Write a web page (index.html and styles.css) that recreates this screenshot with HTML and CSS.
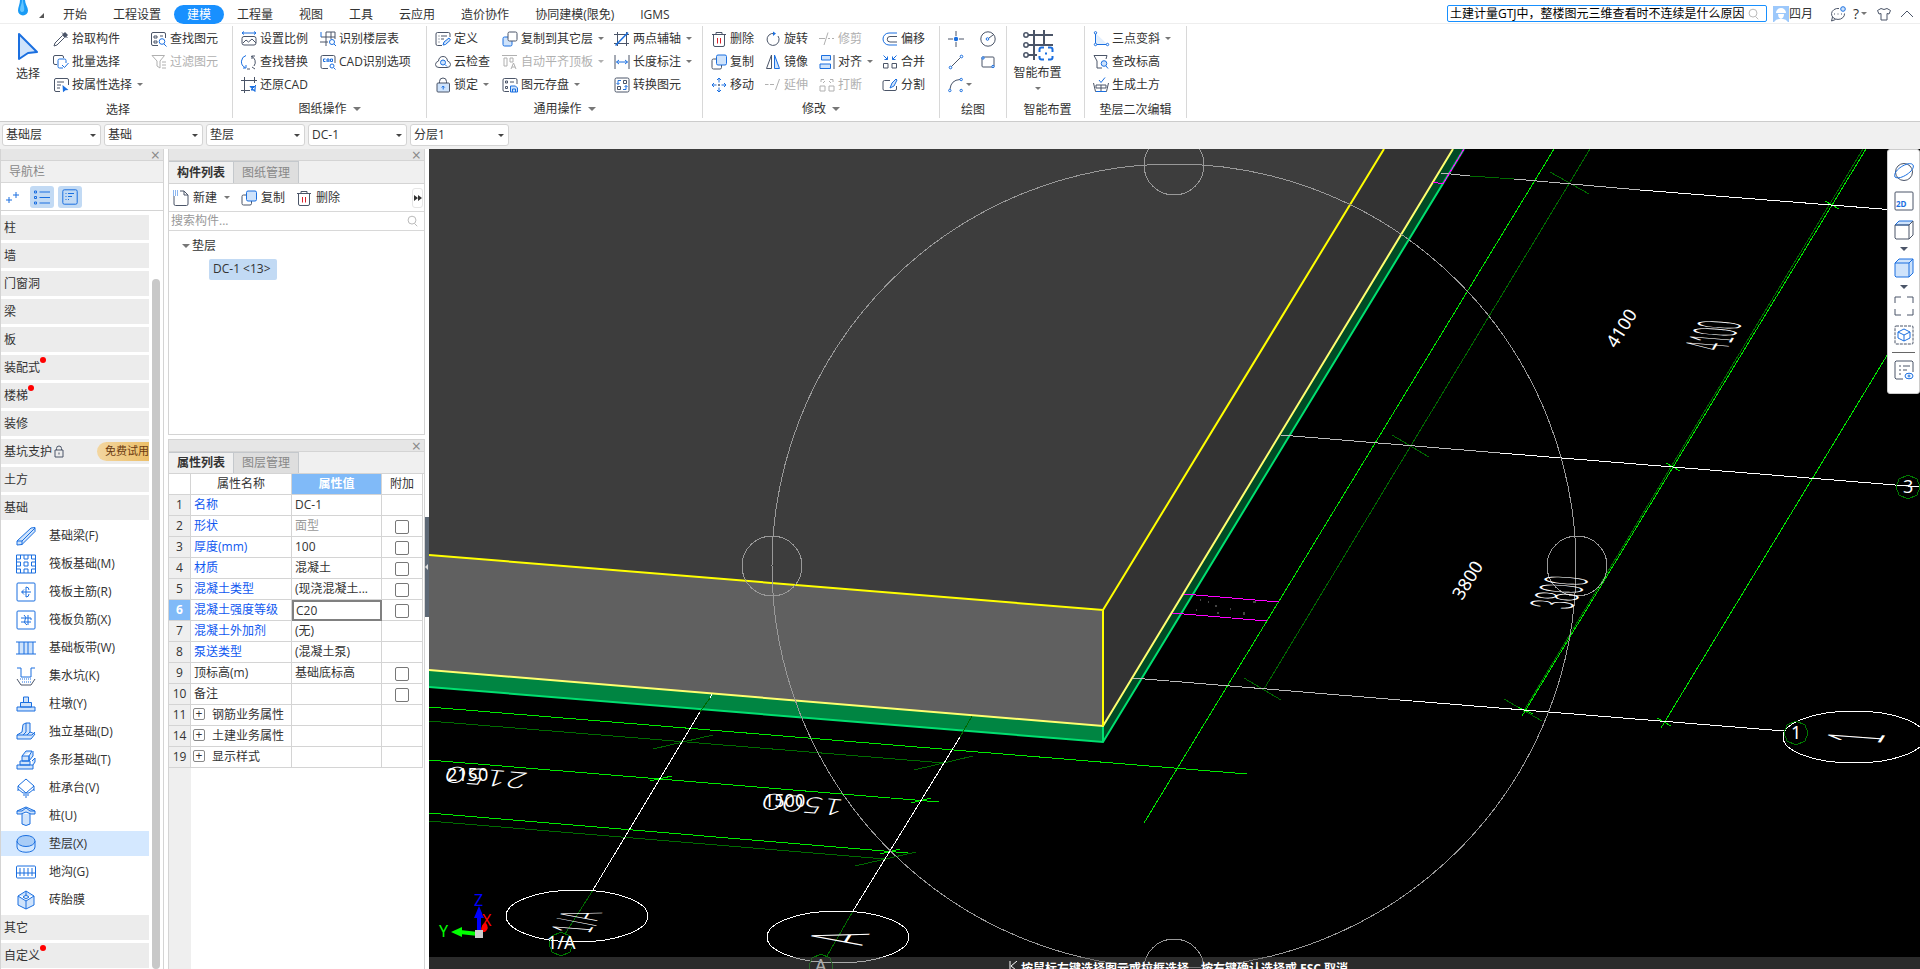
FILE: index.html
```html
<!DOCTYPE html>
<html lang="zh-CN">
<head>
<meta charset="utf-8">
<title>建模</title>
<link rel="stylesheet" href="styles.css">
</head>
<body>
<header class="topbar">
  <div class="brand">
    <svg class="drop" width="12" height="16" viewBox="0 0 12 16"><path d="M3 0C3 4 1 7 1 10.500a5 5 0 0 0 10 0C11 7 8 4 8 0z" fill="#1a9bf5"/><path d="M5 0c0 4-2 6-2 10 1 3 3 2 4 1C8 8 6 4 6 0z" fill="#63c5ff"/></svg>
    <svg class="corner" width="5" height="5" viewBox="0 0 5 5"><path d="M5 0v5H0z" fill="#555"/></svg>
  </div>
  <nav class="tabs">
    <button>开始</button><button>工程设置</button><button class="on">建模</button><button>工程量</button><button>视图</button><button>工具</button><button>云应用</button><button>造价协作</button><button>协同建模(限免)</button><button>IGMS</button>
  </nav>
  <div class="tools">
    <div class="ask"><input type="text" aria-label="搜索" value="土建计量GTJ中，整楼图元三维查看时不连续是什么原因"><svg class="i" viewBox="0 0 16 16" style="--s:14px"><circle cx="8" cy="7" r="4.500" class="g"/><path d="M11 11l3 3" class="g"/></svg></div>
    <div class="user"><svg width="16" height="16" viewBox="0 0 16 16"><rect width="16" height="16" fill="#9cc8fb"/><path d="M3 7a5 5 0 0 1 10 0zM5 8h6q0 4-3 5-3-1-3-5zM1 16q2-3 5-3h4q3 0 5 3z" fill="#fff"/></svg><span>四月</span></div>
    <button class="ib" aria-label="消息"><svg class="i" viewBox="0 0 16 16"><path d="M9 2.500a6.500 5.500 0 1 0 5.500 5M2.500 11L1.500 15l4-1.500" class="k"/><path d="M4 8h1M7.500 8h1M11 8h1" class="k"/><circle cx="13" cy="3" r="2.300" class="bl"/></svg></button>
    <button class="ib help" aria-label="帮助">?<i class="tri s"></i></button>
    <button class="ib" aria-label="皮肤"><svg class="i" viewBox="0 0 16 16"><path d="M5 2.500q3 2 6 0l3.500 2L13 8l-2-.5v6.500H5V7.500L3 8 1.500 4.500z" class="k"/></svg></button>
    <button class="ib" aria-label="收起"><svg class="i" viewBox="0 0 16 16"><path d="M2 11l6-6 6 6" class="k"/></svg></button>
  </div>
</header>

<svg width="0" height="0" class="defs">
  <symbol id="copy" viewBox="0 0 16 16"><path d="M5 5H2.500A1.500 1.500 0 0 0 1 6.500v7A1.500 1.500 0 0 0 2.500 15H9a1.500 1.500 0 0 0 1.500-1.500V11" class="k"/><rect x="5.500" y="1" width="10" height="10" rx="1.500" class="bl"/></symbol>
  <symbol id="trash" viewBox="0 0 16 16"><path d="M1 3.500h14M5 3.500V1.500h6v2M2.500 3.500V14q0 1.500 1.500 1.500h8q1.500 0 1.500-1.500V3.500" class="k"/><path d="M6.500 7v5.500M9.500 7v5.500" stroke="#d9202a"/></symbol>
</svg>

<section class="ribbon">
  <div class="group g1">
    <div class="cols">
      <button class="big"><svg width="24" height="30" viewBox="0 0 24 30"><path d="M3 3l18 18-9 1-9 6z" fill="#cfe3fb" stroke="#1a6fe0" stroke-width="2" stroke-linejoin="round"/></svg><span>选择</span></button>
      <div class="col c98">
        <button><svg class="i" viewBox="0 0 16 16"><path d="M9 1.500l5.500 5.500M9.500 4.500L2 12l-1 3 3-1 7.500-7.500" class="k"/><path d="M9 4l3-3 3 3-3 3z" fill="#4b5568"/></svg>拾取构件</button>
        <button><svg class="i" viewBox="0 0 16 16"><path d="M4 10.500H2A1.500 1.500 0 0 1 .5 9V3A1.500 1.500 0 0 1 2 1.500h7A1.500 1.500 0 0 1 10.500 3v1" class="k"/><path d="M13 9V6.500A1.500 1.500 0 0 0 11.500 5h-5A1.500 1.500 0 0 0 5 6.500v6A1.500 1.500 0 0 0 6.500 14H10M9 11l2.500 2.500L15.500 9" class="b"/></svg>批量选择</button>
        <button><svg class="i" viewBox="0 0 16 16"><path d="M7 14.500H3A1.500 1.500 0 0 1 1.500 13V3A1.500 1.500 0 0 1 3 1.500h11A1.500 1.500 0 0 1 15.500 3v5M4 5h7M4 8h4M4 11h3" class="k"/><path d="M9.500 8l6 5-3 .3-2.500 2z" fill="#1a6fe0"/></svg>按属性选择<i class="tri"></i></button>
      </div>
      <div class="col">
        <button><svg class="i" viewBox="0 0 16 16"><path d="M7 14.500H2A1.500 1.500 0 0 1 .5 13V3A1.500 1.500 0 0 1 2 1.500h11A1.500 1.500 0 0 1 14.500 3v4M3 5h3v2H3zM3 10h3v2H3zM9 5h3" class="k"/><circle cx="11" cy="10.500" r="2.800" class="b"/><path d="M13 13l2.500 2.500" class="b"/></svg>查找图元</button>
        <button class="off"><svg class="i" viewBox="0 0 16 16"><path d="M1 1.500h12.500L9 7v7l-3-2V7zM11 8h4M11 11h4M11 14h4" class="g"/></svg>过滤图元</button>
      </div>
    </div>
    <p class="cap">选择</p>
  </div>
  <div class="group g2">
    <div class="cols">
      <div class="col c79">
        <button><svg class="i" viewBox="0 0 16 16"><path d="M1 2h14M3 .5L1 2l2 1.500M13 .5L15 2l-2 1.500" class="b"/><path d="M3 5.500h10q2 0 2 2V12q0 2-2 2H3q-2 0-2-2V7.500q0-2 2-2zM2 12l3-3 2.500 2L11 8l4 4" class="k"/></svg>设置比例</button>
        <button><svg class="i" viewBox="0 0 16 16"><path d="M5 1.500A6.500 6.500 0 0 0 4 13.500M2 14h3v-3" class="b"/><path d="M10 2a6.500 6.500 0 0 1 3 10M11 5V2h3M11 13l3 2M6 15h3" class="k"/></svg>查找替换</button>
        <button><svg class="i" viewBox="0 0 16 16"><path d="M0 3.500h16M3.500 0v16M0 13.500h9M13.500 0v6" class="k"/><path d="M15 8l-5 5h4M9 9.500h5v5z" fill="#1a6fe0" stroke="#1a6fe0"/></svg>还原CAD</button>
      </div>
      <div class="col">
        <button><svg class="i" viewBox="0 0 16 16"><path d="M6 1v14M11 1v7M6 1h9v7M1 6h14M0 11h8" class="k"/><path d="M1 1v5" class="b"/><circle cx="12" cy="11" r="2.500" class="b"/><path d="M14 13l2 2" class="b"/></svg>识别楼层表</button>
        <button><svg class="i" viewBox="0 0 16 16"><path d="M8 14.500H2.500A1.500 1.500 0 0 1 1 13V3a1.500 1.500 0 0 1 1.500-1.500h11A1.500 1.500 0 0 1 15 3v6" class="k"/><path d="M5.500 5H3.500v2.500h2M7 8V5h2v3M7 7h2M10.500 5h2v2.500h-2z" class="b"/><circle cx="12" cy="12" r="2" class="b"/><path d="M14 14l1.500 1.500" class="b"/></svg>CAD识别选项</button>
      </div>
    </div>
    <p class="cap">图纸操作<i class="tri m"></i></p>
  </div>
  <div class="group g3">
    <div class="cols">
      <div class="col c67">
        <button><svg class="i" viewBox="0 0 16 16"><path d="M7 14.500H2.500A1.500 1.500 0 0 1 1 13V3a1.500 1.500 0 0 1 1.500-1.500h11A1.500 1.500 0 0 1 15 3v3M3.500 5h1M6 5h6M3.500 8h1M6 8h3M3.500 11h1" class="k"/><path d="M8 14l1-3 5-4 1.500 2-5 4.500z" class="bl"/></svg>定义</button>
        <button><svg class="i" viewBox="0 0 16 16"><path d="M4 13.500q-3.500 0-3.500-3 0-2.500 3-3.500Q4 2.500 8 2.500T12.500 7q3 1 3 3.500 0 3-3.500 3z" class="k"/><circle cx="8" cy="8.500" r="2.500" class="bl"/><path d="M10 10.500l2 2" class="b"/></svg>云检查</button>
        <button><svg class="i" viewBox="0 0 16 16"><path d="M4.500 6V4.500a3.500 3.500 0 0 1 7 0V6" class="k"/><rect x="2" y="6" width="12.500" height="9" rx="1" fill="#cfe3fb" stroke="#4b5568"/><path d="M8.200 9v3.500M6.700 10.500L8.200 9l1.500 1.500" class="b"/></svg>锁定<i class="tri"></i></button>
      </div>
      <div class="col c112">
        <button><svg class="i" viewBox="0 0 16 16"><rect x="1" y="6" width="9" height="9" rx="1.500" class="bl"/><rect x="6" y="1" width="9" height="9" rx="1.500" fill="#fff" stroke="#4b5568"/></svg>复制到其它层<i class="tri"></i></button>
        <button class="off"><svg class="i" viewBox="0 0 16 16"><path d="M0 1.500h15M2 4h3v8H2zM8 4h3v4H8zM9 15l2.500-6 2.500 6M10 13h3" class="g"/></svg>自动平齐顶板<i class="tri"></i></button>
        <button><svg class="i" viewBox="0 0 16 16"><path d="M7 14.500H2.500A1.500 1.500 0 0 1 1 13V3a1.500 1.500 0 0 1 1.500-1.500h11A1.500 1.500 0 0 1 15 3v4M3.500 4h2v2h-2zM8 5h4M3.500 9.500h2v2h-2z" class="k"/><path d="M8.500 9h5l2 2v4h-7zM10.500 15v-3h3v3" class="bl"/></svg>图元存盘<i class="tri"></i></button>
      </div>
      <div class="col">
        <button><svg class="i" viewBox="0 0 16 16"><path d="M3.500 1v14M12.500 1v14M0 3.500h15M0 12.500h15" class="k"/><path d="M1.500 14.500l12.500-13" class="b" stroke-width="1.500"/></svg>两点辅轴<i class="tri"></i></button>
        <button><svg class="i" viewBox="0 0 16 16"><path d="M1 1v14M15 1v14" class="k"/><path d="M2.500 8h11M5 6L2.500 8 5 10M11 6l2.500 2-2.500 2" class="b"/></svg>长度标注<i class="tri"></i></button>
        <button><svg class="i" viewBox="0 0 16 16"><rect x="1" y="1" width="14" height="14" rx="1.500" class="k"/><path d="M9.500 3.500h3v3h-3zM3.500 9.500h3v3h-3z" class="k"/><path d="M7 3.500H4v4M2.500 6L4 7.500 5.500 6M9 12.500h3v-4M10.500 10L12 8.500l1.500 1.500" class="b"/></svg>转换图元</button>
      </div>
    </div>
    <p class="cap">通用操作<i class="tri m"></i></p>
  </div>
  <div class="group g4">
    <div class="cols">
      <div class="col c54">
        <button><svg class="i"><use href="#trash"/></svg>删除</button>
        <button><svg class="i"><use href="#copy"/></svg>复制</button>
        <button><svg class="i" viewBox="0 0 16 16"><path d="M8 1v4.500M8 10.500V15M1 8h4.500M10.500 8H15M6 3l2-2 2 2M6 13l2 2 2-2M3 6L1 8l2 2M13 6l2 2-2 2" class="b"/><path d="M7 8h2M8 7v2" class="k"/></svg>移动</button>
      </div>
      <div class="col c54">
        <button><svg class="i" viewBox="0 0 16 16"><path d="M9 2.500A6 6 0 1 0 13 5" class="k"/><path d="M8 .5l3 2-3 2.500z" fill="#1a6fe0"/></svg>旋转</button>
        <button><svg class="i" viewBox="0 0 16 16"><path d="M6.500 1v13.500H1.500z" class="k"/><path d="M9.500 1v13.500h5z" class="bl"/></svg>镜像</button>
        <button class="off"><svg class="i" viewBox="0 0 16 16"><path d="M0 7.500h3.500M5 7.500h4M10.500 13l4-11" class="g"/></svg>延伸</button>
      </div>
      <div class="col c63">
        <button class="off"><svg class="i" viewBox="0 0 16 16"><path d="M0 7.500h6M9 7.500h2M13 7.500h2M5 14L9 1.500" class="g"/></svg>修剪</button>
        <button><svg class="i" viewBox="0 0 16 16"><path d="M15 1v14" class="k"/><path d="M2.500 1.500h9v4.500h-9zM1 10h10.500v4.500H1z" class="bl"/></svg>对齐<i class="tri"></i></button>
        <button class="off"><svg class="i" viewBox="0 0 16 16"><path d="M1 9h5v5H1zM10 9h5v5h-5zM2 5V2.500h3M4 6l2-2M14 5V2.500h-3M12 6l-2-2" class="g"/></svg>打断</button>
      </div>
      <div class="col">
        <button><svg class="i" viewBox="0 0 16 16"><path d="M15 2H7a6 6 0 0 0 0 12h8" class="b"/><path d="M15 5.500H8a2.500 2.500 0 0 0 0 5.500h7" class="k"/></svg>偏移</button>
        <button><svg class="i" viewBox="0 0 16 16"><path d="M1.500 9.500h4.500v4.500H1.500zM10 9.500h4.500v4.500H10z" class="k"/><path d="M1.500 1.500l4 4M5.500 2.500v3h-3M14.500 1.500l-4 4M10.500 2.500v3h3" class="b"/></svg>合并</button>
        <button><svg class="i" viewBox="0 0 16 16"><path d="M8 3.500H2.500A1.500 1.500 0 0 0 1 5v7a1.500 1.500 0 0 0 1.500 1.500H13a1.500 1.500 0 0 0 1.500-1.500V9" class="k"/><path d="M8 11l2-5 4-4 1 1-3 6z" class="bl"/></svg>分割</button>
      </div>
    </div>
    <p class="cap">修改<i class="tri m"></i></p>
  </div>
  <div class="group g5">
    <div class="draw">
      <button aria-label="点"><svg class="i" viewBox="0 0 16 16"><path d="M8 0v5M8 11v5M0 8h5M11 8h5" class="k"/><circle cx="8" cy="8" r="2.200" fill="#1a6fe0"/></svg></button>
      <button aria-label="圆"><svg class="i" viewBox="0 0 16 16"><circle cx="8" cy="8" r="7.200" class="k"/><circle cx="7.500" cy="8" r="1.300" class="b"/><path d="M9 7l4-3" class="k"/></svg></button>
      <button aria-label="直线"><svg class="i" viewBox="0 0 16 16"><path d="M3.500 12.500l9-9" class="k"/><circle cx="2.500" cy="13.500" r="1.300" class="b"/><circle cx="13.500" cy="2.500" r="1.300" class="b"/></svg></button>
      <button aria-label="矩形"><svg class="i" viewBox="0 0 16 16"><rect x="2" y="3" width="12" height="10" rx="1" class="k"/><circle cx="3" cy="4" r="1.200" class="bl"/><circle cx="13" cy="12.500" r="1.200" class="bl"/></svg></button>
      <button aria-label="弧"><svg class="i" viewBox="0 0 16 16"><path d="M2 12Q3 3 12 2.500" class="k"/><circle cx="1.800" cy="13.500" r="1.200" class="b"/><circle cx="13.200" cy="2.500" r="1.200" class="b"/><circle cx="13.200" cy="13.500" r="1.200" class="b"/></svg><i class="tri"></i></button>
    </div>
    <p class="cap">绘图</p>
  </div>
  <div class="group g6">
    <button class="big smart"><svg width="32" height="32" viewBox="0 0 32 32"><path d="M5 6h26M5 16h26M5 26h10M12 1v30M22 1v14" stroke="#4b5568" stroke-width="2" fill="none"/><g fill="#fff" stroke="#4b5568" stroke-width="1.500"><circle cx="4" cy="6" r="2.200"/><circle cx="4" cy="16" r="2.200"/><circle cx="4" cy="26" r="2.200"/></g><path d="M16 18h16v14H16z" fill="#fff"/><path d="M22 18.500h-2.500a2 2 0 0 0-2 2V23M26 18.500h2.500a2 2 0 0 1 2 2V23M17.500 27v1.500a2 2 0 0 0 2 2H22M26 30.500h2.500a2 2 0 0 0 2-2V27M23 24.500h2" stroke="#1a6fe0" stroke-width="2" fill="none"/></svg><span>智能布置</span><i class="tri"></i></button>
    <p class="cap">智能布置</p>
  </div>
  <div class="group g7">
    <div class="cols">
      <div class="col">
        <button><svg class="i" viewBox="0 0 16 16"><path d="M2.500 2v11.500h12z" fill="#e3effd"/><path d="M2.500 3v9M4 13.500h9" class="b"/><circle cx="2.500" cy="1.800" r="1.200" class="b"/><circle cx="2.500" cy="13.500" r="1.200" class="b"/><circle cx="14.500" cy="13.500" r="1.200" class="b"/></svg>三点变斜<i class="tri"></i></button>
        <button><svg class="i" viewBox="0 0 16 16"><path d="M1 1.500h13L13 5M1 1.500L4 7v7h5" class="k"/><circle cx="11" cy="9.500" r="2.800" class="bl"/><path d="M13 12l2 2.500" class="b"/></svg>查改标高</button>
        <button><svg class="i" viewBox="0 0 16 16"><path d="M.5 6l2 8.500h11l2-8.500M3 11V8h10v3M8 8v6M3 11h10" class="k"/><path d="M6 3l2 2.500L12 .5M3 14.500h10" class="b"/></svg>生成土方</button>
      </div>
    </div>
    <p class="cap">垫层二次编辑</p>
  </div>
</section>

<div class="combos">
  <label class="combo"><select aria-label="楼层"><option>基础层</option></select></label>
  <label class="combo"><select aria-label="构件大类"><option>基础</option></select></label>
  <label class="combo"><select aria-label="构件类型"><option>垫层</option></select></label>
  <label class="combo"><select aria-label="构件"><option>DC-1</option></select></label>
  <label class="combo"><select aria-label="分层"><option>分层1</option></select></label>
</div>

<main class="work">
  <aside class="nav">
    <div class="strip"><button aria-label="关闭">×</button></div>
    <h2 class="title">导航栏</h2>
    <div class="modes">
      <button aria-label="新增"><svg class="i" viewBox="0 0 16 16"><path d="M4 8v6M1 11h6M11 3v6M8 6h6" class="b"/></svg></button>
      <button class="on" aria-label="列表"><svg class="i" viewBox="0 0 16 16"><path d="M5.500 3H16M5.500 8.500H16M5.500 14H16M.5 2h2v2h-2zM.5 7.500h2v2h-2zM.5 13h2v2h-2z" class="b"/></svg></button>
      <button class="on" aria-label="详情"><svg class="i" viewBox="0 0 16 16"><rect x=".8" y=".8" width="14.400" height="14.400" rx="1.500" class="b"/><path d="M3.500 4.500h1M6 4.500h6M3.500 7.500h1M6 7.500h4M3.500 10.500h1M6 10.500h1" class="b"/></svg></button>
    </div>
    <div class="navbody">
      <ul class="tree">
        <li>柱</li><li>墙</li><li>门窗洞</li><li>梁</li><li>板</li>
        <li><span class="dot">装配式</span></li><li><span class="dot">楼梯</span></li><li>装修</li>
        <li class="trial">基坑支护<svg width="12" height="14" viewBox="0 0 12 14"><path d="M3.500 5V3.500a2.500 2.500 0 0 1 5 0V5M2 5h8v7H2zM6 7.500v2" class="k"/></svg><b>免费试用</b></li>
        <li>土方</li><li>基础</li>
        <li class="sub"><svg class="n" viewBox="0 0 20 20"><path d="M1 15l14-13 4-.5v4L6 18.500l-5 .5zM1 15h5v4M6 15L19 2" class="bl"/></svg>基础梁(F)</li>
        <li class="sub"><svg class="n" viewBox="0 0 20 20"><path d="M.5 1h19v18H.5zM.5 5h4V1M8 1v4h4V1M15.500 1v4h4M.5 15h4v4M8 19v-4h4v4M15.500 19v-4h4M.5 8h4v4h-4M8 8h4v4H8zM19.500 8h-4v4h4" class="b"/></svg>筏板基础(M)</li>
        <li class="sub"><svg class="n" viewBox="0 0 20 20"><rect x="1" y="1" width="18" height="18" rx="1" class="b"/><path d="M5 10h10M10 5v10M8 7.500a3 3 0 0 0 0 5M10 5q3 0 3 3M13 12q0 3-3 3" class="b"/></svg>筏板主筋(R)</li>
        <li class="sub"><svg class="n" viewBox="0 0 20 20"><rect x="1" y="1" width="18" height="18" rx="1" class="b"/><path d="M5 8h10v2M5 12h10M8 5q3 2 1 5t2 5M12 5v10" class="b"/></svg>筏板负筋(X)</li>
        <li class="sub"><svg class="n" viewBox="0 0 20 20"><path d="M3 4h14v12H3z" fill="#cfe3fb"/><path d="M0 4h20M0 16h20M3 4v12M8 4v12M12 4v12M17 4v12" class="b"/></svg>基础板带(W)</li>
        <li class="sub"><svg class="n" viewBox="0 0 20 20"><path d="M1 2h4v9h10V2h4" class="b"/><path d="M1 13l4 6h10l4-6" class="k"/><path d="M4 13h12M6 16h9" class="b dash"/></svg>集水坑(K)</li>
        <li class="sub"><svg class="n" viewBox="0 0 20 20"><path d="M7.500 3h5v5.500h-5zM4.500 8.500h11V13h-11zM1 13h18v4H1z" class="bl"/></svg>柱墩(Y)</li>
        <li class="sub"><svg class="n" viewBox="0 0 20 20"><path d="M7 2.500l3-1.500h4v9l5 2-4 5H1v-4l5-3zM10 1v9l-3 3M14 10l-3 3H1M11 13h5l3-3" class="bl"/></svg>独立基础(D)</li>
        <li class="sub"><svg class="n" viewBox="0 0 20 20"><path d="M6 6l4-5h6l-3 5v5l4-5V1M1 15h16v4H1zM4 11h10v4H4zM6 6h7v5H6zM17 15l2-3V8l-3 3" class="bl"/></svg>条形基础(T)</li>
        <li class="sub"><svg class="n" viewBox="0 0 20 20"><path d="M10 1l8 7-8 7-8-7zM2 8v5M18 8v5M2 11l5 4M18 11l-5 4M8 14v4M12 14v4M10 15v5" class="b"/></svg>桩承台(V)</li>
        <li class="sub"><svg class="n" viewBox="0 0 20 20"><path d="M6 8v10q4 3 8 0V8" class="bl"/><path d="M1 5l9-4 9 4v3h-4L10 6 5 8H1zM1 5h5l4-3 4 3h5" class="bl"/></svg>桩(U)</li>
        <li class="sub cur"><svg class="n" viewBox="0 0 20 20"><path d="M1 7v6c0 7 18 7 18 0V7" class="b"/><ellipse cx="10" cy="7" rx="9" ry="5.500" fill="#a9cdf7" stroke="#1a6fe0"/></svg>垫层(X)</li>
        <li class="sub"><svg class="n" viewBox="0 0 20 20"><rect x=".5" y="4" width="19" height="12" rx="1" class="b"/><path d="M0 11h20M4 6v8M8 6v8M12 6v8M16 6v8" class="b"/></svg>地沟(G)</li>
        <li class="sub"><svg class="n" viewBox="0 0 20 20"><path d="M10 1l8 5v9l-8 4-8-4V6zM2 6l8 5 8-5M10 11v8M10 1v4M7 7l3-2 3 2-3 2z" class="bl"/></svg>砖胎膜</li>
        <li>其它</li><li><span class="dot">自定义</span></li>
      </ul>
      <div class="scroll"></div>
    </div>
  </aside>

  <div class="side">
    <section class="panel list">
      <div class="strip"><button aria-label="关闭">×</button></div>
      <div class="ptabs"><button class="on">构件列表</button><button>图纸管理</button></div>
      <div class="bar">
        <button><svg class="i" viewBox="0 0 16 16"><path d="M1 6v8q0 1.500 1.500 1.500h11q1.500 0 1.500-1.500V5l-4-4H7M11 1v4h4" class="k"/><path d="M0 1h5M0 3h5M0 5h5" stroke="#1a6fe0" stroke-dasharray="1 1"/></svg>新建<i class="tri s"></i></button>
        <button><svg class="i"><use href="#copy"/></svg>复制</button>
        <button><svg class="i"><use href="#trash"/></svg>删除</button>
        <button class="more" aria-label="更多"><svg width="8" height="8" viewBox="0 0 8 8"><path d="M0 1l4 3-4 3zM4 1l4 3-4 3z" fill="#333"/></svg></button>
      </div>
      <div class="find"><input type="text" placeholder="搜索构件..." aria-label="搜索构件"><svg class="i" viewBox="0 0 16 16" style="--s:14px"><circle cx="8" cy="7" r="4.500" class="g"/><path d="M11 11l3 3" class="g"/></svg></div>
      <div class="node"><i class="tri m"></i>垫层</div>
      <div class="leaf">DC-1 &lt;13&gt;</div>
    </section>
    <section class="panel props">
      <div class="strip"><button aria-label="关闭">×</button></div>
      <div class="ptabs"><button class="on">属性列表</button><button>图层管理</button></div>
      <div class="sheet">
      <table>
        <thead><tr><th></th><th>属性名称</th><th class="sel">属性值</th><th>附加</th></tr></thead>
        <tbody>
        <tr><th>1</th><td class="l">名称</td><td>DC-1</td><td></td></tr>
        <tr><th>2</th><td class="l">形状</td><td class="dim">面型</td><td><input type="checkbox" aria-label="形状附加"></td></tr>
        <tr><th>3</th><td class="l">厚度(mm)</td><td>100</td><td><input type="checkbox" aria-label="厚度附加"></td></tr>
        <tr><th>4</th><td class="l">材质</td><td>混凝土</td><td><input type="checkbox" aria-label="材质附加"></td></tr>
        <tr><th>5</th><td class="l">混凝土类型</td><td>(现浇混凝土...</td><td><input type="checkbox" aria-label="混凝土类型附加"></td></tr>
        <tr><th class="sel">6</th><td class="l">混凝土强度等级</td><td class="edit">C20</td><td><input type="checkbox" aria-label="强度等级附加"></td></tr>
        <tr><th>7</th><td class="l">混凝土外加剂</td><td>(无)</td><td></td></tr>
        <tr><th>8</th><td class="l">泵送类型</td><td>(混凝土泵)</td><td></td></tr>
        <tr><th>9</th><td>顶标高(m)</td><td>基础底标高</td><td><input type="checkbox" aria-label="顶标高附加"></td></tr>
        <tr><th>10</th><td>备注</td><td></td><td><input type="checkbox" aria-label="备注附加"></td></tr>
        <tr><th>11</th><td class="x"><button aria-label="展开">+</button>钢筋业务属性</td><td></td><td></td></tr>
        <tr><th>14</th><td class="x"><button aria-label="展开">+</button>土建业务属性</td><td></td><td></td></tr>
        <tr><th>19</th><td class="x"><button aria-label="展开">+</button>显示样式</td><td></td><td></td></tr>
        </tbody>
      </table>
      </div>
    </section>
  </div>
  <div class="split"><button aria-label="折叠面板"></button></div>

  <section class="view">
    <svg class="scene" viewBox="429 149 1491 820" preserveAspectRatio="xMinYMin slice">
      <!-- raft solid -->
      <path d="M429 149H1384L1103 610 429 555z" fill="#3d3d3d"/>
      <path d="M1384 149H1453L1103 726V610z" fill="#333"/>
      <path d="M429 555L1103 610V726L429 670z" fill="#606060"/>
      <path d="M429 670L1103 726V742L429 687z" fill="#008542"/>
      <path d="M1453 149H1464L1103 742V726z" fill="#004a25"/>
      <g fill="none" stroke-width="2">
        <path d="M429 687L1103 742 1464 149M1103 726V742" stroke="#00e070"/>
        <path d="M429 670L1103 726 1453 149" stroke="#ffff70"/>
        <path d="M429 555L1103 610 1384 149M1103 610V726" stroke="#ffff00"/>
      </g>
      <!-- axis grid -->
      <g class="crisp" fill="none" stroke="#006a00">
        <path d="M1590 149L1264 689M1550 172L1589 194M1392 435L1429 457M1244 678L1281 700M1863 149L1523 712M1504 699L1542 721"/>
        <path d="M429 721L944 763M653 749L713 735M914 770L973 756M429 821L885 859M855 866L916 852"/>
        <path d="M710 698L700 712M972 716L960 737M593 890L565 934M853 911L827 956M1470 176L1514 179"/>
      </g>
      <g class="crisp" fill="none" stroke="#00e800">
        <path d="M1554 149L1144 823M1866 149L1522 716M1825 201L1839 209M1666 463L1680 471M1518 707L1533 714M1920 301L1661 728M1657 718L1671 726"/>
        <path d="M429 707L1247 774M429 760L939 802M650 781L672 776M911 803L931 798M429 813L908 853M880 854L900 849"/>
      </g>
      <g class="crisp" fill="none" stroke="#bbb">
        <path d="M1441 173L1470 176M1514 179L1640 190M1281 435L1500 453M1133 678L1400 700"/>
        <path d="M1640 190L1920 212M1500 453L1920 487M1400 700L1784 731M712 694L710 698M700 712L593 890M960 737L853 911" stroke="#fff"/>
        <ellipse cx="577" cy="916" rx="71" ry="26" stroke="#fff"/><ellipse cx="838" cy="937" rx="71" ry="26" stroke="#fff"/><ellipse cx="1854" cy="737" rx="71" ry="26" stroke="#fff"/>
      </g>
      <path class="crisp" d="M1184 594L1279 602M1172 613L1267 621M1464 149L1443 184 1433 182" fill="none" stroke="#f0f"/>
      <path d="M1200 600h1M1215 606h2M1196 610h1M1218 612v2M1244 612v3M1230 609h1M1253 602h3M1208 602h1" stroke="#888"/>
      <g class="crisp" fill="none" stroke="#007a00"><path d="M561 932l9 4 3 8-3 8-9 4-9-4-3-8 3-8zM821 954l9 4 3 8-3 8-9 4-9-4-3-8 3-8zM1796 721l9 4 3 8-3 8-9 4-9-4-3-8 3-8zM1908 475l9 4 3 8-3 8-9 4-9-4-3-8 3-8z"/></g>
      <!-- orbit ring -->
      <g class="crisp" fill="none" stroke="#999"><circle cx="1174" cy="566" r="402"/><circle cx="772" cy="566" r="30"/><circle cx="1577" cy="566" r="30"/><circle cx="1174" cy="165" r="30"/><circle cx="1174" cy="969" r="30"/></g>
      <g class="label">
        <text x="447" y="781">2150</text><text x="764" y="807">1500</text>
        <text x="547" y="949">1/A</text><text x="815" y="972">A</text><text x="1791" y="739">1</text><text x="1903" y="493">3</text>
        <text transform="translate(1616 349) rotate(-58)">4100</text>
        <text transform="translate(1462 601) rotate(-58)">3800</text>
      </g>
      <!-- labels lying in the ground plane -->
      <g class="flat">
        <text transform="matrix(.36 -.6 3 .24 1726 351)">4100</text>
        <text transform="matrix(.4 -.68 3 .24 1571 610)">3800</text>
        <text transform="matrix(-1.75 -.15 .35 -1.12 529 773)">2150</text>
        <text transform="matrix(-1.75 -.15 .35 -1.12 846 800)">1500</text>
        <text transform="matrix(.42 -.67 2.76 .21 589 934)">1/A</text>
        <text transform="matrix(.6 -.95 3.85 .28 862 946)">A</text>
        <text transform="matrix(.6 -.95 3.85 .28 1879 745)">1</text>
      </g>
      <!-- axis triad -->
      <path d="M479 932V916" stroke="#00f" stroke-width="4"/><path d="M474 918l5-12 5 12z" fill="#00f"/>
      <path d="M478 934L460 932" stroke="#0f0" stroke-width="4"/><path d="M462 927l-11 5 11 5z" fill="#0f0"/>
      <path d="M481 932q0-9 5-9 4 5-1 9z" fill="#f00"/><rect x="475" y="930" width="8" height="8" fill="#ccc"/>
      <g class="axis"><text x="474" y="906" fill="#00f">Z</text><text x="439" y="937" fill="#0f0">Y</text><text x="482" y="926" fill="#f00">X</text></g>
    </svg>
    <div class="hint"><svg width="9" height="9" viewBox="0 0 9 9"><path d="M1 0v9M8 0L2 5l5 4" fill="none" stroke="#fff"/></svg>按鼠标左键选择图元或拉框选择，按右键确认选择或 ESC 取消</div>
    <div class="dock">
      <button aria-label="动态观察"><svg class="d" viewBox="0 0 20 20"><circle cx="10" cy="10" r="8.500" class="k"/><path d="M1 15C-2 8 16-2 19 3S6 19 1 15z" class="b"/></svg></button>
      <button aria-label="二维"><svg class="d" viewBox="0 0 20 20"><rect x="1" y="1" width="18" height="18" rx="1" class="k"/><text x="2" y="16" class="two">2D</text></svg></button>
      <button aria-label="视角"><svg class="d" viewBox="0 0 20 20"><path d="M1 5l4-4h14l-4 4z" class="bl"/><path d="M1 5h14v14H2l-1-1zM15 5l4-4v14l-4 4" class="k"/></svg></button>
      <i class="tri m"></i>
      <button aria-label="显示模式"><svg class="d" viewBox="0 0 20 20"><path d="M1 5l4-4h14v14l-4 4H2l-1-1zM1 5h14v14M15 5l4-4" class="bl"/></svg></button>
      <i class="tri m"></i>
      <button aria-label="全屏"><svg class="d" viewBox="0 0 20 20"><path d="M7 1H1v6M13 1h6v6M7 19H1v-6M13 19h6v-6" class="k"/></svg></button>
      <button aria-label="局部三维"><svg class="d" viewBox="0 0 20 20"><rect x="1" y="1" width="18" height="18" rx="1" class="k" stroke-dasharray="3 1"/><path d="M10 4l6 3v6l-6 3-6-3V7zM4 7l6 3 6-3M10 10v6" class="b"/></svg></button>
      <hr>
      <button aria-label="显示设置"><svg class="d" viewBox="0 0 20 20"><path d="M9 19H2l-1-1V2l1-1h16l1 1v10M5 6h2M9 6h7M5 10h2M9 10h4M5 14h2" class="k"/><ellipse cx="15" cy="16" rx="4" ry="2.800" class="b"/><circle cx="15" cy="16" r="1" class="b"/></svg></button>
    </div>
  </section>
</main>
</body>
</html>
```

FILE: styles.css
```css
* { box-sizing: border-box; }
body { margin: 0; min-height: 100vh; display: flex; flex-direction: column; background: #fff; color: #333; font: 12px/16px "Open Sans", "Noto Sans CJK SC", sans-serif; overflow: hidden; }
button { font: inherit; color: inherit; background: none; border: 0; padding: 0; margin: 0; display: flex; align-items: center; white-space: nowrap; }
input, select { font: inherit; color: inherit; }
.i { --s: 16px; width: var(--s); height: var(--s); flex: none; overflow: visible; }
.k { fill: none; stroke: #4b5568; }
.b { fill: none; stroke: #1a6fe0; }
.bl { fill: #cfe3fb; stroke: #1a6fe0; }
.g { fill: none; stroke: #b0b0b0; }
.dash { stroke-dasharray: 1 1; }
.defs { position: absolute; }
.tri { flex: none; width: 0; height: 0; border: 3px solid transparent; border-top-color: #777; border-bottom: 0; }
.tri.m { border-width: 4px 4px 0; }
.tri.s { border-width: 3px 3px 0; }

.topbar { display: flex; height: 24px; border-bottom: 1px solid #eee; flex: none; }
.brand { width: 50px; display: flex; padding-left: 17px; }
.corner { margin: 13px 0 0 10px; }
.tabs { display: flex; padding-top: 5px; }
.tabs button { height: 19px; padding: 0 13px; border-radius: 10px; }
.tabs .on { background: #1890ff; color: #fff; }
.tools { margin-left: auto; display: flex; align-items: center; padding: 4px 5px 0 0; }
.ask { display: flex; align-items: center; width: 320px; height: 17px; border: 1px solid #1890ff; border-radius: 2px; padding: 0 6px 0 2px; color: #000; margin-right: 2px; }
.ask input { flex: 1; min-width: 0; border: 0; padding: 0; height: 14px; background: none; outline: 0; margin-right: 2px; }
.user { display: flex; align-items: center; margin: 0 17px 0 4px; }
.ib { margin-right: 7px; }
.ib:last-child { margin: 0; }
.help { font-size: 14px; gap: 2px; margin-right: 9px; }

.ribbon { display: flex; height: 98px; border-bottom: 1px solid #ccc; flex: none; }
.group { border-right: 1px solid #d8d8d8; margin: 2px 0 3px; display: flex; flex-direction: column; padding-left: 8px; }
.cols { display: flex; flex: 1; padding-top: 1px; }
.col button { height: 23px; gap: 3px; }
.col .tri { margin-left: 2px; }
.off { color: #b0b0b0; }
.off .tri { border-top-color: #b0b0b0; }
.cap { margin: 0 0 0 -8px; display: flex; justify-content: center; align-items: center; gap: 6px; }
.g1 { width: 233px; padding-left: 0; }
.g2 { width: 194px; }
.g3 { width: 276px; }
.g4 { width: 237px; }
.g5 { width: 67px; }
.g6 { width: 78px; padding: 0; }
.g7 { width: 102px; }
.g1 .cap, .g6 .cap { margin-left: 4px; }
.g2 .cap, .g3 .cap, .g4 .cap { padding-bottom: 1px; }
.c98 { width: 98px; } .c79 { width: 79px; } .c67 { width: 67px; } .c112 { width: 112px; } .c54 { width: 54px; } .c63 { width: 63px; }
.big { flex-direction: column; width: 53px; padding: 4px 0 0 3px; align-self: flex-start; gap: 5px; }
.smart { width: 100%; padding: 3px 16px 0 0; gap: 4px; flex: 1; align-self: auto; }
.smart .tri { margin-top: 2px; }
.draw { flex: 1; padding-top: 1px; display: grid; grid-template: 23px 23px 23px / 32px 24px; align-items: center; }
.draw .tri { margin-left: 2px; }

.combos { display: flex; gap: 3px; padding: 2px; height: 27px; background: #f0f0f0; flex: none; }
.combo { position: relative; width: 99px; height: 22px; }
.combo select { appearance: none; width: 100%; height: 22px; border: 1px solid #d4d4d4; border-radius: 3px; background: #fff; padding: 0 3px; }
.combo::after { content: ""; position: absolute; right: 5px; top: 10px; border: 3px solid transparent; border-top-color: #444; border-bottom: 0; }

.work { flex: 1; min-height: 0; display: flex; }
.strip { height: 12px; background: #e6e6e6; border-bottom: 1px solid #d4d4d4; display: flex; justify-content: flex-end; padding-right: 3px; flex: none; }
.strip button { font-size: 16px; line-height: 10px; height: 11px; color: #888; }
.nav { width: 164px; border: 1px solid #d4d4d4; border-width: 0 1px; display: flex; flex-direction: column; }
.title { margin: 0; height: 22px; line-height: 21px; padding-left: 8px; font-size: 12px; font-weight: 400; color: #888; background: #f0f0f0; border-bottom: 1px solid #d8d8d8; flex: none; }
.modes { display: flex; height: 28px; padding: 3px 0; gap: 4px; border-bottom: 1px solid #d4d4d4; flex: none; }
.modes button { width: 24px; height: 22px; justify-content: center; border-radius: 3px; }
.modes .on { background: #c2daf4; }
.modes button:first-child { margin-right: 1px; }
.navbody { flex: 1; min-height: 0; display: flex; gap: 3px; overflow: hidden; }
.tree { list-style: none; margin: 0; padding: 4px 0 0; width: 148px; display: flex; flex-direction: column; gap: 3px; }
.tree li { height: 25px; flex: none; display: flex; align-items: center; padding-left: 3px; background: #ececec; overflow: hidden; }
.tree .sub { background: none; padding-left: 15px; gap: 13px; }
.tree .cur { background: #d4e8ff; }
.n { width: 20px; height: 20px; flex: none; }
.dot { position: relative; }
.dot::after { content: ""; position: absolute; left: 100%; top: -3px; width: 6px; height: 6px; border-radius: 50%; background: #f00; }
.trial svg { margin-left: 1px; }
.trial b { margin-left: auto; font-size: 11px; font-weight: 400; color: #6b3a10; background: linear-gradient(90deg, #f3d6a0, #ecbf68); border-radius: 10px 0 0 10px; padding: 1px 0 2px 8px; }
.scroll { width: 8px; margin-top: 68px; border-radius: 4px; background: #c8c8c8; }

.side { width: 257px; margin-left: 4px; display: flex; flex-direction: column; gap: 4px; }
.panel { border: 1px solid #d4d4d4; border-top: 0; display: flex; flex-direction: column; }
.list { height: 286px; flex: none; }
.props { flex: 1; min-height: 0; border-top: 1px solid #d4d4d4; border-bottom: 0; }
.ptabs { display: flex; height: 23px; background: #f0f0f0; border-bottom: 1px solid #d4d4d4; flex: none; }
.props .ptabs { height: 22px; }
.ptabs button { width: 65px; justify-content: center; background: #dedede; color: #888; border-right: 1px solid #c4c8cc; border-top: 1px solid #c4c8cc; }
.ptabs .on { background: #f0f0f0; color: #333; font-weight: 700; }
.bar { display: flex; align-items: center; height: 28px; border-bottom: 1px solid #d8d8d8; padding: 0 1px 0 4px; gap: 11px; }
.bar button { gap: 4px; }
.bar .tri { margin-left: 3px; }
.bar .more { margin-left: auto; width: 11px; height: 20px; justify-content: center; border: 1px solid #e6e6e6; border-radius: 3px; }
.find { display: flex; align-items: center; height: 19px; border-bottom: 1px solid #d8d8d8; padding: 0 5px 0 2px; }
.find input { flex: 1; min-width: 0; border: 0; padding: 0; height: 16px; }
.find input::placeholder { color: #999; }
.node { display: flex; align-items: center; gap: 2px; padding: 7px 0 0 13px; }
.leaf { align-self: flex-start; margin: 5px 0 0 40px; padding: 2px 6px 3px 4px; background: #c2daf4; border-radius: 2px; }
.sheet { flex: 1; min-height: 0; background: linear-gradient(90deg, #efefef 22px, #fff 22px); }
table { border-collapse: separate; border-spacing: 0; table-layout: fixed; width: 254px; }
th, td { height: 21px; padding: 0; font-weight: 400; border: 1px solid #d4d4d4; border-width: 0 1px 1px 0; white-space: nowrap; overflow: hidden; }
td { padding-left: 3px; background: #fff; }
thead th { background: #fff; }
thead th:nth-child(1) { width: 22px; } thead th:nth-child(2) { width: 101px; } thead th:nth-child(3) { width: 90px; }
tbody th { background: #efefef; }
thead .sel, tbody .sel { background: #80baf8; color: #fff; font-weight: 700; }
.l { color: #1058f0; }
.dim { color: #999; }
.edit { border: 2px solid #808080; padding-left: 2px; }
td:last-child { padding: 0; text-align: center; }
td input { appearance: none; width: 14px; height: 14px; margin: 0; border: 1px solid #777; border-radius: 2px; vertical-align: middle; background: #fff; }
.x button { display: inline-flex; justify-content: center; width: 12px; height: 12px; margin: 0 7px 0 -1px; border: 1px solid #888; border-radius: 2px; vertical-align: 1px; line-height: 10px; }
.split { width: 4px; }
.split button { width: 4px; height: 100px; margin-top: 368px; background: #5d6875; }
.split button::after { content: ""; border: 3px solid transparent; border-right-color: #ddd; border-left: 0; }

.view { position: relative; flex: 1; min-width: 0; background: #000; overflow: hidden; }
.scene { display: block; width: 100%; height: 100%; }
.crisp { shape-rendering: crispEdges; }
.label { fill: #fff; font: 18px "Noto Sans", sans-serif; }
.flat { fill: #fff; font: 300 20px Lato, sans-serif; }
.axis { font: 16px "Noto Sans", sans-serif; }
.hint { position: absolute; left: 0; right: 0; bottom: 0; height: 12px; padding: 4px 0 0 8px; background: rgba(86, 86, 86, .5); color: #fff; display: flex; justify-content: center; gap: 3px; overflow: hidden; font-weight: 700; line-height: 16px; }
.hint svg { flex: none; }
.dock { position: absolute; top: 0; right: 0; width: 33px; padding: 12px 0 13px; background: #fff; border: 1px solid #ccc; border-radius: 3px; display: flex; flex-direction: column; align-items: center; gap: 9px; }
.d { width: 20px; height: 20px; }
.dock .tri { border-top-color: #4b5568; margin: -2px 0; }
.dock hr { width: 23px; margin: -2px 0; border: 0; border-top: 1px solid #666; }
.two { font: 700 8px "Open Sans", sans-serif; fill: #1a6fe0; }
```
